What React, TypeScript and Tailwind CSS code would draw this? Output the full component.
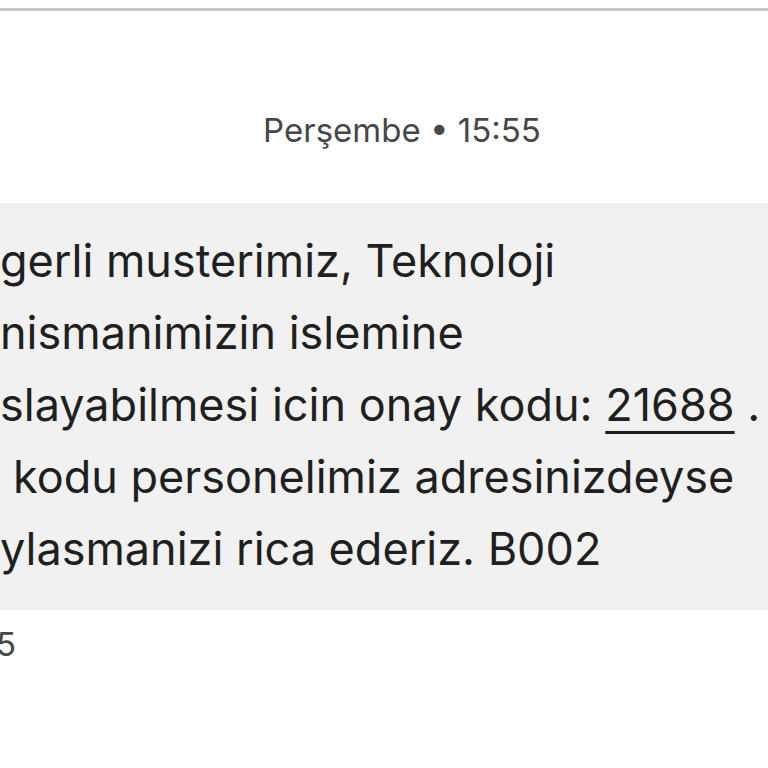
const lines: React.ReactNode[] = [
   'gerli musterimiz, Teknoloji',
   'nismanimizin islemine',
   <>
      slayabilmesi icin onay kodu: <span className="underline decoration-[3px] underline-offset-[10px]">21688</span> .
   </>,
   <span className="pl-[13px]">kodu personelimiz adresinizdeyse</span>,
   'ylasmanizi rica ederiz. B002',
];

export default function App() {
   return (
      <div
         className="w-[768px] h-[768px] overflow-hidden bg-white"
         style={{ fontFamily: 'Inter, Roboto, sans-serif' }}>
         <div className="pt-[8px]">
            <div className="h-[3px] bg-[#c9c9c9]" />
         </div>
         <div className="flex justify-center pl-[36px] pt-[99px] text-[33px] leading-[40px] text-[#474747]">
            Perşembe • 15:55
         </div>
         <div className="mt-[53px] bg-[#f1f1f1] h-[407px] pt-[22px] text-[45px] leading-[72px] text-[#1f1f1f] whitespace-nowrap">
            {lines.map((line, i) => (
               <div key={i}>{line}</div>
            ))}
         </div>
         <div className="pt-[14px] text-[33px] leading-[40px] text-[#474747] -ml-[67px]">15:55</div>
      </div>
   );
}
